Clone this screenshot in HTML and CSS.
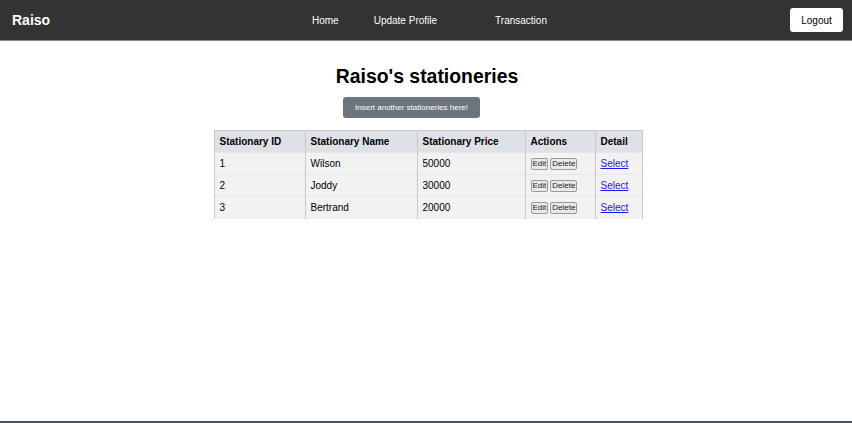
FILE: index.html
```html
<!DOCTYPE html>
<html>
<head>
<meta charset="utf-8">
<link rel="stylesheet" href="styles.css">
</head>
<body>
<nav class="navbar">
  <div class="brand">Raiso</div>
  <div class="links">
    <a class="nav-link home">Home</a>
    <a class="nav-link profile">Update Profile</a>
    <a class="nav-link trans">Transaction</a>
  </div>
  <button class="logout">Logout</button>
</nav>
<main class="content">
  <h1 class="title">Raiso's stationeries</h1>
  <button class="insert">Insert another stationeries here!</button>
  <table class="grid">
    <thead>
      <tr><th class="c1">Stationary ID</th><th class="c2">Stationary Name</th><th class="c3">Stationary Price</th><th class="c4">Actions</th><th class="c5">Detail</th></tr>
    </thead>
    <tbody>
      <tr><td>1</td><td>Wilson</td><td>50000</td><td><button class="small">Edit</button><button class="small">Delete</button></td><td><a class="sel" href="#">Select</a></td></tr>
      <tr><td>2</td><td>Joddy</td><td>30000</td><td><button class="small">Edit</button><button class="small">Delete</button></td><td><a class="sel" href="#">Select</a></td></tr>
      <tr><td>3</td><td>Bertrand</td><td>20000</td><td><button class="small">Edit</button><button class="small">Delete</button></td><td><a class="sel" href="#">Select</a></td></tr>
    </tbody>
  </table>
</main>
<div class="bottom-line"></div>
</body>
</html>
```
FILE: styles.css
```css
* { box-sizing: border-box; }
html, body { margin: 0; padding: 0; height: 100%; }
body {
  font-family: "Liberation Sans", Arial, sans-serif;
  background: #fff;
  color: #000;
  display: flex;
  flex-direction: column;
}
.navbar {
  height: 41px;
  background: #333333;
  border-bottom: 1px solid #8a8a8a;
  display: flex;
  align-items: center;
  padding: 0 9px 0 12px;
}
.brand {
  color: #fff;
  font-weight: bold;
  font-size: 14px;
  width: 300px;
}
.links {
  flex: 1;
  display: flex;
  font-size: 10px;
  color: #fff;
}
.nav-link { color: #fff; text-decoration: none; }
.home { margin-right: 35px; }
.profile { margin-right: 58px; }
.logout {
  background: #fff;
  border: none;
  border-radius: 3px;
  width: 53px;
  height: 24px;
  font-family: "Liberation Sans", Arial, sans-serif;
  font-size: 10px;
  color: #000;
  padding: 0;
}
.content {
  flex: 1;
  display: flex;
  flex-direction: column;
  align-items: center;
}
.title {
  font-size: 19.4px;
  font-weight: bold;
  margin: 24px 0 0 2px;
  line-height: 22px;
}
.insert {
  margin: 10px 0 0 -29px;
  background: #6c757d;
  color: #fff;
  border: none;
  border-radius: 3px;
  width: 137px;
  height: 21px;
  font-family: "Liberation Sans", Arial, sans-serif;
  font-size: 8px;
  padding: 0;
}
.grid {
  margin-top: 12px;
  border-collapse: collapse;
  font-size: 10px;
  margin-left: 4px;
}
.grid th, .grid td {
  text-align: left;
  padding: 0 5px;
  height: 22px;
  border-left: 1px solid #c8c8c8;
  border-right: 1px solid #c8c8c8;
  border-top: 1px solid #e6e6e6;
}
.grid th {
  background: #dee2e6;
  font-weight: bold;
  border-top: 1px solid #c8c8c8;
}
.grid td { background: #f2f2f2; }
.c1 { width: 91px; }
.c2 { width: 112px; }
.c3 { width: 108px; }
.c4 { width: 70px; }
.c5 { width: 47px; }
.small {
  font-family: "Liberation Sans", Arial, sans-serif;
  font-size: 8px;
  height: 12px;
  line-height: 10px;
  padding: 0 1px;
  border: 1px solid #9a9a9a;
  background: #e9e9e9;
  border-radius: 2px;
  margin-right: 2px;
  color: #222;
  vertical-align: middle;
}
.sel { color: #1a1aee; }
.bottom-line {
  height: 2px;
  background: #4a5060;
}
```
